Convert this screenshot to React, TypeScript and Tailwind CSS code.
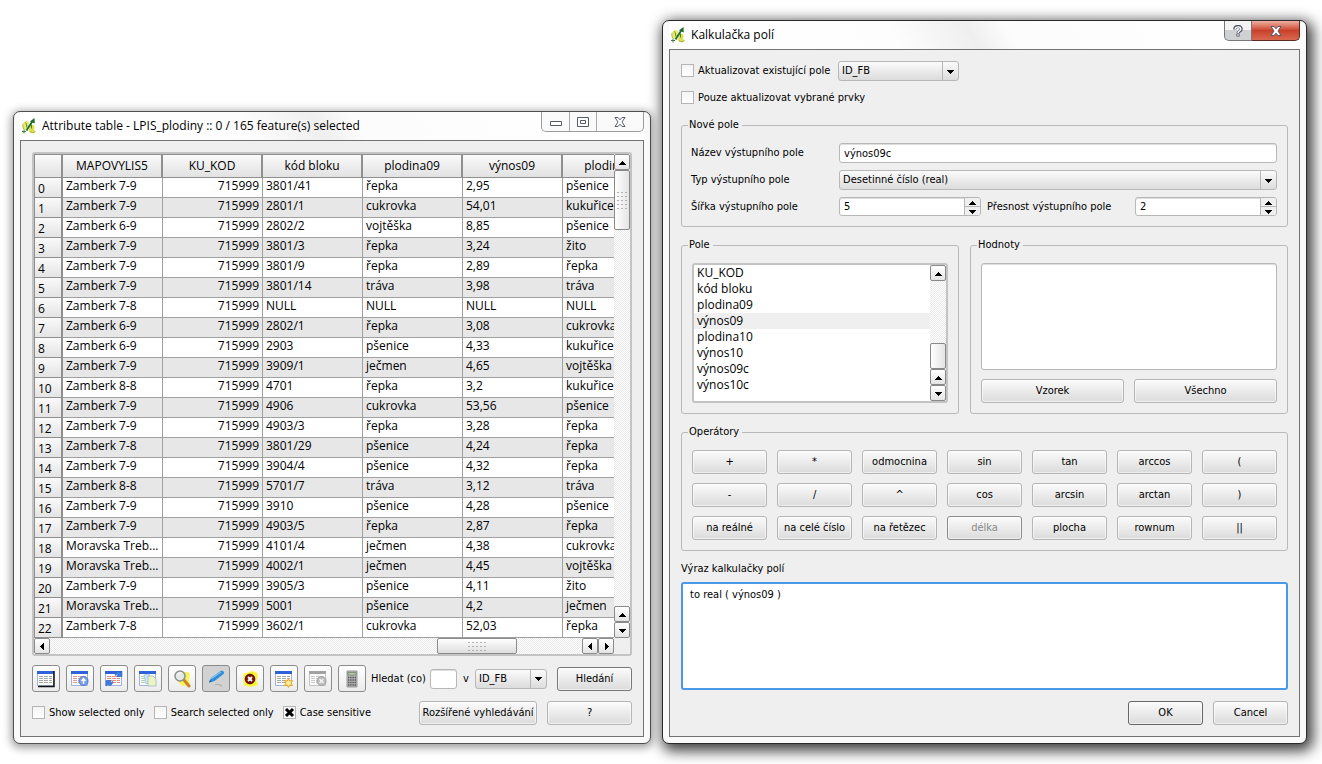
import { useState } from "react";
import type { ReactNode } from "react";

const UI_FONT = "font-['Tahoma','DejaVu_Sans_Condensed','Noto_Sans',sans-serif]";
const DATA_FONT = "font-['Segoe_UI','Open_Sans','Noto_Sans',sans-serif]";

const BUTTON =
  "h-6 rounded-[3px] border bg-linear-to-b from-[#fbfbfb] to-[#dbdbdb] text-center whitespace-nowrap shadow-[inset_0_0_0_1px_#ffffff90]";
const FIELD =
  "rounded-[3px] border border-[#b7b7b7] bg-white shadow-[inset_0_1px_0_#dedede] outline-none";

const COLUMNS = ["MAPOVYLIS5", "KU_KOD", "kód bloku", "plodina09", "výnos09", "plodina10"];

const ROWS = [
  ["Zamberk 7-9", "3801/41", "řepka", "2,95", "pšenice"],
  ["Zamberk 7-9", "2801/1", "cukrovka", "54,01", "kukuřice"],
  ["Zamberk 6-9", "2802/2", "vojtěška", "8,85", "pšenice"],
  ["Zamberk 7-9", "3801/3", "řepka", "3,24", "žito"],
  ["Zamberk 7-9", "3801/9", "řepka", "2,89", "řepka"],
  ["Zamberk 7-9", "3801/14", "tráva", "3,98", "tráva"],
  ["Zamberk 7-8", "NULL", "NULL", "NULL", "NULL"],
  ["Zamberk 6-9", "2802/1", "řepka", "3,08", "cukrovka"],
  ["Zamberk 6-9", "2903", "pšenice", "4,33", "kukuřice"],
  ["Zamberk 7-9", "3909/1", "ječmen", "4,65", "vojtěška"],
  ["Zamberk 8-8", "4701", "řepka", "3,2", "kukuřice"],
  ["Zamberk 7-9", "4906", "cukrovka", "53,56", "pšenice"],
  ["Zamberk 7-9", "4903/3", "řepka", "3,28", "řepka"],
  ["Zamberk 7-8", "3801/29", "pšenice", "4,24", "řepka"],
  ["Zamberk 7-9", "3904/4", "pšenice", "4,32", "řepka"],
  ["Zamberk 8-8", "5701/7", "tráva", "3,12", "tráva"],
  ["Zamberk 7-9", "3910", "pšenice", "4,28", "pšenice"],
  ["Zamberk 7-9", "4903/5", "řepka", "2,87", "řepka"],
  ["Moravska Treb...", "4101/4", "ječmen", "4,38", "cukrovka"],
  ["Moravska Treb...", "4002/1", "ječmen", "4,45", "vojtěška"],
  ["Zamberk 7-9", "3905/3", "pšenice", "4,11", "žito"],
  ["Moravska Treb...", "5001", "pšenice", "4,2", "ječmen"],
  ["Zamberk 7-8", "3602/1", "cukrovka", "52,03", "řepka"],
];

const FIELDS = ["KU_KOD", "kód bloku", "plodina09", "výnos09", "plodina10", "výnos10", "výnos09c", "výnos10c"];

const OPERATORS = [
  "+", "*", "odmocnina", "sin", "tan", "arccos", "(",
  "-", "/", "^", "cos", "arcsin", "arctan", ")",
  "na reálné", "na celé číslo", "na řetězec", "délka", "plocha", "rownum", "||",
];

function AppIcon() {
  return (
    <svg viewBox="0 0 14 16" className="h-4 w-3.5 shrink-0">
      <path d="M2 4c2-2 5-1 5 1S5 12 3 12 0 6 2 4z" fill="#e6eb6c" />
      <path d="M9 7c2-1 4 0 3.500 3-.5 2 0 3 1 4-2 2-6 1.500-6.500-1C6.800 11 8 8 9 7z" fill="#dbe04f" />
      <path d="M8 13.500c1 1.500 4 1.500 5.500 0M1 6c-.5 2 0 4 1 5" fill="none" stroke="#a4ac33" strokeWidth=".900" />
      <path d="M3.500 4.500c1 1 1 3 1.500 5" fill="none" stroke="#5b7d2a" />
      <path d="M4.500 12.500 10.500 3" stroke="#1c6b2c" strokeWidth="1.800" />
      <path d="m8 3.500 4.500-3.500.2 5.500z" fill="#1c6b2c" />
      <path d="M9.500 6.500v4" stroke="#5b7d2a" />
      <path d="M0 13.500h4M2 11.500v4" stroke="#3f7f39" />
    </svg>
  );
}

function Arrow({ dir }: { dir: "up" | "down" | "left" | "right" }) {
  const d = {
    up: "M0 6h7L3.500 2z",
    down: "M0 2h7L3.500 6z",
    left: "M5 0v7L1 3.500z",
    right: "M2 0v7l4-3.500z",
  }[dir];
  return (
    <svg viewBox="0 0 7 7" className="h-[7px] w-[7px]" shapeRendering="crispEdges">
      <path d={d} />
    </svg>
  );
}

function ScrollButton({ dir }: { dir: "up" | "down" | "left" | "right" }) {
  return (
    <button
      aria-label={dir}
      className="flex h-4 w-4 shrink-0 items-center justify-center rounded-[2px] border border-[#8a8a8a] bg-linear-to-b from-white to-[#e4e4e4]"
    >
      <Arrow dir={dir} />
    </button>
  );
}

const TRACK = "bg-[repeating-conic-gradient(#ffffff_0_25%,#e9e9e9_0_50%)] bg-[length:2px_2px]";

function Grip({ vertical = false }: { vertical?: boolean }) {
  return vertical ? (
    <svg viewBox="0 0 10 19" className="h-[19px] w-2.5" shapeRendering="crispEdges">
      <path
        d="M0 1.500h10M0 5.500h10M0 9.500h10M0 13.500h10M0 17.500h10"
        stroke="#b0b0b0"
        strokeDasharray="2 2"
      />
    </svg>
  ) : (
    <svg viewBox="0 0 18 11" className="h-[11px] w-[18px]" shapeRendering="crispEdges">
      <path d="M0 1.500h18M0 5.500h18M0 9.500h18" stroke="#b0b0b0" strokeDasharray="2 2" />
    </svg>
  );
}

function CloseGlyph({ stroke, fill }: { stroke: string; fill: string }) {
  return (
    <svg viewBox="0 0 12 10" className="h-2.5 w-3">
      <path d="M1 .500h3l2 2.300 2-2.300h3L8 5l3 4.500H8L6 7.200 4 9.500H1L4 5z" fill={fill} stroke={stroke} strokeLinejoin="round" />
    </svg>
  );
}

function Window({
  title,
  controls,
  className,
  children,
}: {
  title: string;
  controls: ReactNode;
  className: string;
  children: ReactNode;
}) {
  return (
    <section className={`min-w-0 rounded-[7px] border bg-[#fafafa] px-1.5 pb-1.5 ${className}`}>
      <header className="flex h-7 items-start rounded-t-[6px] bg-[linear-gradient(60deg,#fff_0%,#fdfdfd_36%,#efefef_48%,#fcfcfc_54%,#fff_100%)]">
        <div className="flex h-7 flex-1 items-center gap-1 pl-0.5">
          <AppIcon />
          <h1 className={`text-[12px] leading-4 whitespace-nowrap pl-0.5 ${DATA_FONT}`}>{title}</h1>
        </div>
        {controls}
      </header>
      <div className="border border-[#727272] bg-[#efefef] p-[11px]">{children}</div>
    </section>
  );
}

function Check({ label, defaultChecked = false }: { label: string; defaultChecked?: boolean }) {
  const [checked, setChecked] = useState(defaultChecked);
  return (
    <label className="flex items-start gap-1 whitespace-nowrap leading-[14px]">
      <span className="relative h-[13px] w-[13px]">
        <input
          type="checkbox"
          checked={checked}
          onChange={(e) => setChecked(e.target.checked)}
          className="block h-[13px] w-[13px] appearance-none border border-[#b5b5b5] bg-linear-to-b from-[#f4f4f4] to-white"
        />
        {checked && (
          <svg viewBox="0 0 13 13" className="pointer-events-none absolute inset-0">
            <path d="m3 3 7 7M10 3l-7 7" stroke="#000" strokeWidth="3" />
          </svg>
        )}
      </span>
      {label}
    </label>
  );
}

function Combo({ label, value, className }: { label: string; value: string; className: string }) {
  return (
    <div className={`relative h-5 ${className}`}>
      <select
        aria-label={label}
        className="block h-5 w-full appearance-none rounded-[3px] border border-[#b7b7b7] bg-linear-to-b from-[#fbfbfb] to-[#dcdcdc] pl-[3px] leading-4 outline-none"
      >
        <option>{value}</option>
      </select>
      <span className="pointer-events-none absolute inset-y-0 right-0 flex w-[17px] items-center justify-center border-l border-[#b7b7b7] pr-0.5">
        <Arrow dir="down" />
      </span>
    </div>
  );
}

function Spin({ id, defaultValue }: { id: string; defaultValue: number }) {
  const [value, setValue] = useState(defaultValue);
  return (
    <div className={`flex h-[19px] overflow-hidden ${FIELD}`}>
      <input
        id={id}
        type="text"
        inputMode="numeric"
        value={value}
        onChange={(e) => setValue(Number(e.target.value) || 0)}
        className="min-w-0 flex-1 pl-1 outline-none"
      />
      <div className="flex w-4 flex-col divide-y divide-[#b7b7b7] border-l border-[#b7b7b7] bg-[#efefef]">
        <button aria-label="up" onClick={() => setValue(value + 1)} className="flex flex-1 items-center justify-center">
          <Arrow dir="up" />
        </button>
        <button aria-label="down" onClick={() => setValue(value - 1)} className="flex flex-1 items-center justify-center">
          <Arrow dir="down" />
        </button>
      </div>
    </div>
  );
}

function Group({ title, className = "", children }: { title: string; className?: string; children: ReactNode }) {
  return (
    <fieldset className={`min-w-0 rounded-[3px] border border-[#b9b9b9] px-2.5 pt-[11px] pb-2.5 ${className}`}>
      <legend className="-ml-1 pl-px pr-[3px] leading-[14px]">{title}</legend>
      {children}
    </fieldset>
  );
}

// small table sheet shared by most toolbar icons
function Sheet({ bar = "#2f62d8", line = "#a9a9a9", frame = "#9fb4dc" }: { bar?: string; line?: string; frame?: string }) {
  return (
    <>
      <path d="M.5 1.500h16v14H.5z" fill="#fdfdfd" stroke={frame} />
      <path d="M0 1h17v3H0z" fill={bar} />
      <path d="M2 6.500h4M7 6.500h4M12 6.500h3M2 8.500h4M7 8.500h4M12 8.500h3M2 10.500h4M7 10.500h4M12 10.500h3M2 12.500h4M7 12.500h4M12 12.500h3" stroke={line} />
    </>
  );
}

const TOOLS: { name: string; active?: boolean; icon: ReactNode }[] = [
  {
    name: "Unselect all",
    icon: (
      <>
        <Sheet />
        <path d="M17 1v15.500H1" fill="none" stroke="#111" strokeWidth="1.500" />
      </>
    ),
  },
  {
    name: "Move selection to top",
    icon: (
      <>
        <Sheet line="#ea9a9a" />
        <circle cx="12.500" cy="11" r="4.500" fill="#7ba3e6" stroke="#4a79cf" />
        <path d="M12.500 14V9.500M10.500 11l2-2.500 2 2.500" fill="none" stroke="#fff" strokeWidth="1.300" />
      </>
    ),
  },
  {
    name: "Invert selection",
    icon: (
      <>
        <Sheet line="#e88a8a" />
        <path d="M10 5c1-4 4-4 5-2.500L17 1v5.500h-5.500l1.500-2c-1-.8-1.500 0-2 1zM8 12c-1 4-4 4-5 2.500L1 16v-5.500h5.500L5 12.500c1 .8 1.500 0 2-1z" fill="#3c7de0" stroke="#2459bd" strokeWidth=".500" />
      </>
    ),
  },
  {
    name: "Copy selected rows",
    icon: (
      <>
        <Sheet line="#b4cfb0" />
        <path d="M5 5l5-1 2 8-5 2z" fill="#cfe6f5" stroke="#8fb6ce" strokeWidth=".600" />
        <path d="M9 6h5l3 3v7H9z" fill="#eef3c4" stroke="#88b3bd" strokeWidth=".700" />
      </>
    ),
  },
  {
    name: "Zoom to selection",
    icon: (
      <>
        <path d="M8 2h7l2 2-1 6 1 5-7 1-5-4z" fill="#f7f25a" />
        <path d="m11 10 5 6" stroke="#c98526" strokeWidth="3" strokeLinecap="round" />
        <circle cx="7" cy="6" r="5" fill="#dfe8ea" fillOpacity=".95" stroke="#8c8f90" strokeWidth="1.500" />
        <path d="M4.500 5c1-2 3-2 4-2" stroke="#fff" fill="none" />
      </>
    ),
  },
  {
    name: "Toggle editing",
    active: true,
    icon: (
      <>
        <path d="m2 12.500 2-4.500L13.500 1c2-1 4.500 1 3 3L7.500 11z" fill="#2d8ddb" />
        <path d="m4.500 8.500 9.500-6.500" stroke="#86c6f3" strokeWidth="1.300" />
        <path d="m2 12.500 1-2.500 2 1.700z" fill="#1f5f9e" />
        <path d="M8 14.500c3-.5 6 0 7 2" fill="none" stroke="#b0b0b0" strokeWidth="1.200" />
      </>
    ),
  },
  {
    name: "Delete selected features",
    icon: (
      <>
        <path d="M3 3.500 7 3l4-2 5 2 .5 4-1 4 1 4-6 1.500-7-1L2.500 10z" fill="#f7f22c" stroke="#faf777" strokeLinejoin="round" />
        <circle cx="9" cy="9" r="4.800" fill="#7d1414" stroke="#4c0909" />
        <path d="m7 7 4 4M11 7l-4 4" stroke="#fff" strokeWidth="1.800" />
      </>
    ),
  },
  {
    name: "New column",
    icon: (
      <>
        <Sheet />
        <path d="m13.500 8.500 1.200 2.500 2.800-.5-1.500 2.500 1.500 2.500-2.800-.5-1.200 2.500-1.200-2.500-2.800.5 1.500-2.500-1.500-2.500 2.800.5z" fill="#fff0a0" stroke="#eda41c" />
      </>
    ),
  },
  {
    name: "Delete column",
    icon: (
      <>
        <Sheet bar="#a2a2a2" line="#cacaca" frame="#c4c4c4" />
        <circle cx="12.500" cy="11" r="4.500" fill="#bcbcbc" stroke="#a2a2a2" />
        <path d="m10.500 9 4 4M14.500 9l-4 4" stroke="#f4f4f4" strokeWidth="1.500" />
      </>
    ),
  },
  {
    name: "Open field calculator",
    icon: (
      <>
        <path d="M4 1h10v16H4z" fill="#b4b4b4" stroke="#9a9a9a" />
        <path d="M5 2.500h8V5H5z" fill="#b9cba6" stroke="#66705c" strokeWidth=".600" />
        <path d="M5 7.500h8M5 10h8M5 12.500h8M5 15h8" stroke="#565656" strokeWidth="1.500" strokeDasharray="1.400 .800" />
      </>
    ),
  },
];

function AttributeTable() {
  return (
    <div className="rounded-[3px] border-2 border-[#c3c3c3] bg-[#efefef]">
      <div className="flex">
        <div className="min-w-0 flex-1 overflow-hidden bg-white">
          <table className={`w-[629px] table-fixed border-separate border-spacing-0 text-[12px] ${DATA_FONT}`}>
            <thead>
              <tr className="h-6">
                <th className="w-[29px] border-t border-r-2 border-b border-l border-[#8f8f8f] bg-linear-to-b from-[#fafafa] to-[#e2e2e2] p-0" />
                {COLUMNS.map((name) => (
                  <th
                    key={name}
                    className="w-[100px] border-t border-r-2 border-b border-[#8f8f8f] bg-linear-to-b from-[#fafafa] to-[#e2e2e2] p-0 text-center leading-4 font-normal"
                  >
                    {name}
                  </th>
                ))}
              </tr>
            </thead>
            <tbody className="leading-4">
              {ROWS.map(([sheet, ...rest], i) => (
                <tr key={i} className="h-5 odd:bg-white even:bg-[#e7e7e7]">
                  <th className="border-r-2 border-b border-l border-[#8f8f8f] bg-linear-to-b from-[#fafafa] to-[#e4e4e4] p-0 pt-[3px] pl-[3px] text-left font-normal">
                    {i}
                  </th>
                  <td className="border-r border-b border-[#a0a0a0] p-0 pb-[3px] pl-[3px] whitespace-nowrap">{sheet}</td>
                  <td className="border-r border-b border-[#a0a0a0] p-0 pr-[3px] pb-[3px] text-right">715999</td>
                  {rest.map((value, j) => (
                    <td key={j} className="border-r border-b border-[#a0a0a0] p-0 pb-[3px] pl-[3px] whitespace-nowrap">
                      {value}
                    </td>
                  ))}
                </tr>
              ))}
            </tbody>
          </table>
        </div>
        <div className={`flex w-4 flex-col ${TRACK}`}>
          <ScrollButton dir="up" />
          <div className="flex h-[60px] items-center justify-center rounded-[2px] border border-[#8a8a8a] bg-linear-to-r from-white to-[#e4e4e4]">
            <Grip vertical />
          </div>
          <div className="flex-1" />
          <ScrollButton dir="up" />
          <ScrollButton dir="down" />
        </div>
      </div>
      <div className="flex">
        <div className={`flex flex-1 ${TRACK}`}>
          <ScrollButton dir="left" />
          <div className="flex-1" />
          <div className="mr-[65px] flex h-4 w-20 items-center justify-center rounded-[2px] border border-[#8a8a8a] bg-linear-to-b from-white to-[#dedede]">
            <Grip />
          </div>
          <ScrollButton dir="left" />
          <ScrollButton dir="right" />
        </div>
        <div className="w-4" />
      </div>
    </div>
  );
}

function AttributeWindow() {
  return (
    <Window
      title="Attribute table - LPIS_plodiny :: 0 / 165 feature(s) selected"
      className="flex-[638_1_0] border-[#4f4f4f] shadow-[0_2px_8px_2px_#00000060]"
      controls={
        <div className="flex h-5 divide-x divide-[#aaaaaa] rounded-b-[5px] border border-t-0 border-[#9c9c9c] bg-[#fafafa]">
          <button aria-label="Minimize" className="flex w-7 items-center justify-center pt-1">
            <svg viewBox="0 0 12 5" className="h-[5px] w-3">
              <path d="M.5.500h11v4H.5z" fill="#fff" stroke="#555a66" />
            </svg>
          </button>
          <button aria-label="Maximize" className="flex w-[27px] items-center justify-center">
            <svg viewBox="0 0 12 10" className="h-2.5 w-3">
              <path d="M.5.500h11v9H.5zM3.500 3.500h5v3h-5z" fill="#fff" stroke="#555a66" />
            </svg>
          </button>
          <button aria-label="Close" className="flex w-[46px] items-center justify-center">
            <CloseGlyph stroke="#555a66" fill="#fff" />
          </button>
        </div>
      }
    >
      <AttributeTable />

      {/* Toolbar */}
      <div className="mt-[9px] flex items-center">
        <div className="flex gap-1.5">
          {TOOLS.map((tool) => (
            <button
              key={tool.name}
              aria-label={tool.name}
              className={`flex h-[27px] w-7 items-center justify-center rounded-[3px] border border-[#8c8c8c] ${
                tool.active ? "bg-[#d2d2d2]" : "bg-linear-to-b from-white to-[#ebebeb]"
              }`}
            >
              <svg viewBox="0 0 18 18" className="h-[18px] w-[18px]">
                {tool.icon}
              </svg>
            </button>
          ))}
        </div>
        <label htmlFor="query" className="ml-[5px] w-[59px] whitespace-nowrap">
          Hledat (co)
        </label>
        <input id="query" type="text" className={`h-5 w-[27px] ${FIELD}`} />
        <span className="w-[18px] text-center">v</span>
        <Combo label="Pole" value="ID_FB" className="w-[72px]" />
        <button className={`ml-2.5 flex-1 border-[#777777] ${BUTTON}`}>Hledání</button>
      </div>

      <div className="mt-[9px] flex items-center">
        <div className="flex flex-1 gap-[9px]">
          <Check label="Show selected only" />
          <Check label="Search selected only" />
          <Check label="Case sensitive" defaultChecked />
        </div>
        <button className={`w-[118px] border-[#b5b5b5] ${BUTTON}`}>Rozšířené vyhledávání</button>
        <button className={`ml-2.5 w-[85px] border-[#b5b5b5] ${BUTTON}`}>?</button>
      </div>
    </Window>
  );
}

function CalculatorWindow() {
  const [selected, setSelected] = useState("výnos09");
  return (
    <Window
      title="Kalkulačka polí"
      className="z-10 flex-[645_1_0] border-[#2a2a2a] shadow-[3px_4px_14px_3px_#000000c0]"
      controls={
        <div className="flex h-5">
          <button
            aria-label="Help"
            className="flex w-7 items-center justify-center rounded-bl-[5px] border border-t-0 border-[#777777] bg-linear-to-b from-[#f4f4f4] from-50% to-[#cfd0d2] to-50%"
          >
            <svg viewBox="0 0 10 12" className="h-3 w-2.5">
              <path d="M1.800 4.500c0-4 6.400-4 6.400-.5C8.200 6.500 5 6 5 8.500M5 9v2.500" fill="none" stroke="#50566a" strokeWidth="3.200" />
              <path d="M2.200 4.200c.3-3 5.600-3 5.600-.2C7.800 6 5 6 5 8M5 9.300v1.500" fill="none" stroke="#fff" strokeWidth="1.400" />
            </svg>
          </button>
          <button
            aria-label="Close"
            className="flex w-12 items-center justify-center rounded-br-[5px] border border-t-0 border-l-0 border-[#5e2a22] bg-linear-to-b from-[#eeb0a2] via-[#c9402a] via-50% to-[#d8694f]"
          >
            <CloseGlyph stroke="#50566a" fill="#fff" />
          </button>
        </div>
      }
    >
      <div className="flex items-center">
        <div className="w-[157px]">
          <Check label="Aktualizovat existující pole" />
        </div>
        <Combo label="Existující pole" value="ID_FB" className="w-[121px]" />
      </div>
      <div className="mt-2.5 flex">
        <Check label="Pouze aktualizovat vybrané prvky" />
      </div>

      <Group title="Nové pole" className="mt-[13px]">
        <div className="-ml-px grid grid-cols-[148px_1fr_154px_1fr] items-center gap-y-[7px]">
          <label htmlFor="name">Název výstupního pole</label>
          <input id="name" type="text" defaultValue="výnos09c" className={`col-span-3 h-5 pl-1 ${FIELD}`} />
          <span>Typ výstupního pole</span>
          <Combo label="Typ výstupního pole" value="Desetinné číslo (real)" className="col-span-3" />
          <label htmlFor="width">Šířka výstupního pole</label>
          <Spin id="width" defaultValue={5} />
          <label htmlFor="precision" className="pl-1.5">
            Přesnost výstupního pole
          </label>
          <Spin id="precision" defaultValue={2} />
        </div>
      </Group>

      <div className="mt-[11px] grid grid-cols-[278fr_318fr] gap-[11px]">
        <Group title="Pole">
          <div className="flex h-[140px] rounded-[3px] border-2 border-[#c3c3c3] bg-white">
            <ul className={`flex-1 text-[12px] leading-4 ${DATA_FONT}`}>
              {FIELDS.map((name) => (
                <li key={name} className={selected === name ? "bg-[#efefef]" : ""}>
                  <button onClick={() => setSelected(name)} className="block w-full pl-[3px] text-left">
                    {name}
                  </button>
                </li>
              ))}
            </ul>
            <div className={`flex w-4 flex-col ${TRACK}`}>
              <ScrollButton dir="up" />
              <div className="flex-1" />
              <div className="h-[26px] rounded-[2px] border border-[#8a8a8a] bg-linear-to-r from-white to-[#e4e4e4]" />
              <ScrollButton dir="up" />
              <ScrollButton dir="down" />
            </div>
          </div>
        </Group>
        <Group title="Hodnoty">
          <div className={`h-[107px] ${FIELD}`} />
          <div className="mt-[9px] grid grid-cols-2 gap-2.5">
            <button className={`border-[#b5b5b5] ${BUTTON}`}>Vzorek</button>
            <button className={`border-[#b5b5b5] ${BUTTON}`}>Všechno</button>
          </div>
        </Group>
      </div>

      <Group title="Operátory" className="mt-[11px]">
        <div className="grid grid-cols-7 gap-x-2.5 gap-y-[9px]">
          {OPERATORS.map((op) => (
            <button
              key={op}
              disabled={op === "délka"}
              className={`border-[#b5b5b5] disabled:border-[#8c8c8c] disabled:text-[#8a8a8a] ${BUTTON}`}
            >
              {op}
            </button>
          ))}
        </div>
      </Group>

      <label htmlFor="expression" className="mt-[11px] block leading-[14px]">
        Výraz kalkulačky polí
      </label>
      <textarea
        id="expression"
        defaultValue="to real ( výnos09 )"
        className="mt-1.5 block h-[108px] w-full resize-none rounded-[3px] border-2 border-[#4a98e8] bg-white px-[7px] py-1 leading-[14px] outline-none"
      />

      <div className="mt-[11px] flex justify-end gap-2.5">
        <button className={`w-[75px] border-[#666666] ${BUTTON}`}>OK</button>
        <button className={`w-[75px] border-[#b5b5b5] ${BUTTON}`}>Cancel</button>
      </div>
    </Window>
  );
}

export default function App() {
  return (
    <main
      className={`flex items-end gap-[11px] bg-white pt-5 pr-[15px] pb-5 pl-[13px] text-[11px] leading-4 text-black ${UI_FONT}`}
    >
      <AttributeWindow />
      <CalculatorWindow />
    </main>
  );
}
